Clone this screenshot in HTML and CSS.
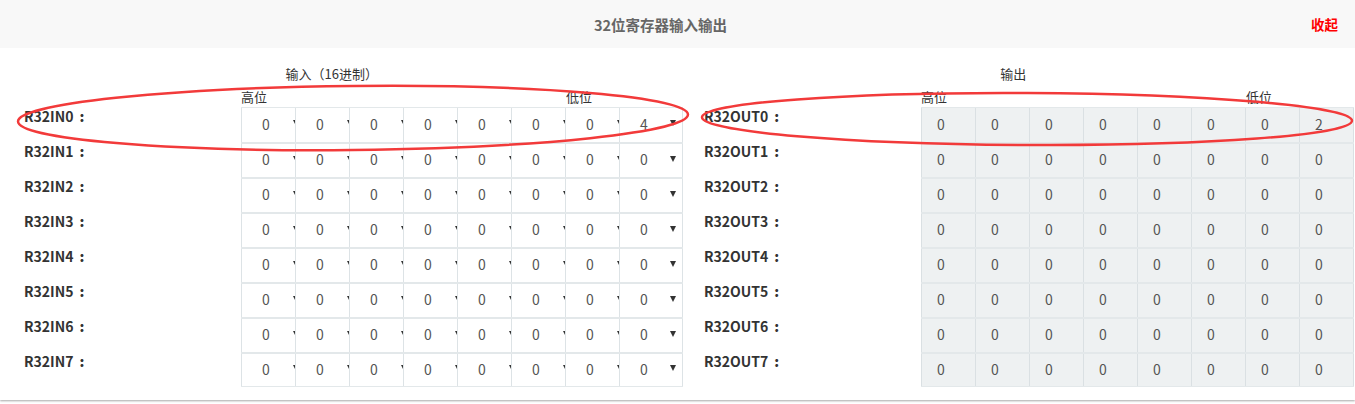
FILE: index.html
```html
<!DOCTYPE html>
<html lang="zh">
<head>
<meta charset="utf-8">
<title>32位寄存器输入输出</title>
<link rel="stylesheet" href="styles.css">
</head>
<body>
<div class="panel">
  <div class="head">
    <span class="title">32位寄存器输入输出</span>
    <a class="toggle">收起</a>
  </div>
  <div class="body">
    <section class="half half-in">
      <div class="cap">输入（16进制）</div>
      <div class="marks"><span class="hi">高位</span><span>低位</span></div>
      <div class="rows">
        <div class="row"><span class="label">R32IN0<b>:</b></span><div class="cells"><div class="sel">0<i></i></div><div class="sel">0<i></i></div><div class="sel">0<i></i></div><div class="sel">0<i></i></div><div class="sel">0<i></i></div><div class="sel">0<i></i></div><div class="sel">0<i></i></div><div class="sel">4<i></i></div></div></div>
        <div class="row"><span class="label">R32IN1<b>:</b></span><div class="cells"><div class="sel">0<i></i></div><div class="sel">0<i></i></div><div class="sel">0<i></i></div><div class="sel">0<i></i></div><div class="sel">0<i></i></div><div class="sel">0<i></i></div><div class="sel">0<i></i></div><div class="sel">0<i></i></div></div></div>
        <div class="row"><span class="label">R32IN2<b>:</b></span><div class="cells"><div class="sel">0<i></i></div><div class="sel">0<i></i></div><div class="sel">0<i></i></div><div class="sel">0<i></i></div><div class="sel">0<i></i></div><div class="sel">0<i></i></div><div class="sel">0<i></i></div><div class="sel">0<i></i></div></div></div>
        <div class="row"><span class="label">R32IN3<b>:</b></span><div class="cells"><div class="sel">0<i></i></div><div class="sel">0<i></i></div><div class="sel">0<i></i></div><div class="sel">0<i></i></div><div class="sel">0<i></i></div><div class="sel">0<i></i></div><div class="sel">0<i></i></div><div class="sel">0<i></i></div></div></div>
        <div class="row"><span class="label">R32IN4<b>:</b></span><div class="cells"><div class="sel">0<i></i></div><div class="sel">0<i></i></div><div class="sel">0<i></i></div><div class="sel">0<i></i></div><div class="sel">0<i></i></div><div class="sel">0<i></i></div><div class="sel">0<i></i></div><div class="sel">0<i></i></div></div></div>
        <div class="row"><span class="label">R32IN5<b>:</b></span><div class="cells"><div class="sel">0<i></i></div><div class="sel">0<i></i></div><div class="sel">0<i></i></div><div class="sel">0<i></i></div><div class="sel">0<i></i></div><div class="sel">0<i></i></div><div class="sel">0<i></i></div><div class="sel">0<i></i></div></div></div>
        <div class="row"><span class="label">R32IN6<b>:</b></span><div class="cells"><div class="sel">0<i></i></div><div class="sel">0<i></i></div><div class="sel">0<i></i></div><div class="sel">0<i></i></div><div class="sel">0<i></i></div><div class="sel">0<i></i></div><div class="sel">0<i></i></div><div class="sel">0<i></i></div></div></div>
        <div class="row last"><span class="label">R32IN7<b>:</b></span><div class="cells"><div class="sel">0<i></i></div><div class="sel">0<i></i></div><div class="sel">0<i></i></div><div class="sel">0<i></i></div><div class="sel">0<i></i></div><div class="sel">0<i></i></div><div class="sel">0<i></i></div><div class="sel">0<i></i></div></div></div>
      </div>
    </section>
    <section class="half half-out">
      <div class="cap">输出</div>
      <div class="marks"><span class="hi">高位</span><span>低位</span></div>
      <div class="rows">
        <div class="row"><span class="label">R32OUT0<b>:</b></span><div class="cells"><div class="out">0</div><div class="out">0</div><div class="out">0</div><div class="out">0</div><div class="out">0</div><div class="out">0</div><div class="out">0</div><div class="out">2</div></div></div>
        <div class="row"><span class="label">R32OUT1<b>:</b></span><div class="cells"><div class="out">0</div><div class="out">0</div><div class="out">0</div><div class="out">0</div><div class="out">0</div><div class="out">0</div><div class="out">0</div><div class="out">0</div></div></div>
        <div class="row"><span class="label">R32OUT2<b>:</b></span><div class="cells"><div class="out">0</div><div class="out">0</div><div class="out">0</div><div class="out">0</div><div class="out">0</div><div class="out">0</div><div class="out">0</div><div class="out">0</div></div></div>
        <div class="row"><span class="label">R32OUT3<b>:</b></span><div class="cells"><div class="out">0</div><div class="out">0</div><div class="out">0</div><div class="out">0</div><div class="out">0</div><div class="out">0</div><div class="out">0</div><div class="out">0</div></div></div>
        <div class="row"><span class="label">R32OUT4<b>:</b></span><div class="cells"><div class="out">0</div><div class="out">0</div><div class="out">0</div><div class="out">0</div><div class="out">0</div><div class="out">0</div><div class="out">0</div><div class="out">0</div></div></div>
        <div class="row"><span class="label">R32OUT5<b>:</b></span><div class="cells"><div class="out">0</div><div class="out">0</div><div class="out">0</div><div class="out">0</div><div class="out">0</div><div class="out">0</div><div class="out">0</div><div class="out">0</div></div></div>
        <div class="row"><span class="label">R32OUT6<b>:</b></span><div class="cells"><div class="out">0</div><div class="out">0</div><div class="out">0</div><div class="out">0</div><div class="out">0</div><div class="out">0</div><div class="out">0</div><div class="out">0</div></div></div>
        <div class="row last"><span class="label">R32OUT7<b>:</b></span><div class="cells"><div class="out">0</div><div class="out">0</div><div class="out">0</div><div class="out">0</div><div class="out">0</div><div class="out">0</div><div class="out">0</div><div class="out">0</div></div></div>
      </div>
    </section>
  </div>
</div>
<svg class="marks-overlay" width="1355" height="404" viewBox="0 0 1355 404">
  <ellipse cx="353" cy="118" rx="335" ry="32" transform="rotate(-0.6 353 118)" fill="none" stroke="#f23a3a" stroke-width="2.5"/>
  <ellipse cx="1027" cy="119" rx="325" ry="26" transform="rotate(0.3 1027 119)" fill="none" stroke="#f23a3a" stroke-width="2.5"/>
</svg>
</body>
</html>
```

FILE: styles.css
```css
html, body {
  margin: 0;
  padding: 0;
  background: #fff;
}
body {
  font-family: "Noto Sans CJK SC", "Noto Sans", sans-serif;
  font-size: 13px;
  color: #333;
  width: 1355px;
  height: 404px;
  overflow: hidden;
  position: relative;
}
.panel {
  height: 400px;
  background: #fff;
  box-shadow: 0 1px 2px rgba(0, 0, 0, 0.35);
}
.head {
  height: 48px;
  background: #f8f8f8;
  display: flex;
  align-items: center;
  padding-left: 10px;
  padding-right: 17px;
}
.title {
  flex: 1;
  text-align: center;
  font-size: 14.5px;
  font-weight: bold;
  color: #666;
}
.toggle {
  color: #f00;
  font-weight: bold;
  font-size: 13.5px;
  cursor: pointer;
}
.body {
  display: flex;
  padding-top: 17px;
}
.half {
  width: 677.5px;
  flex-shrink: 0;
  box-sizing: border-box;
}
.half-in { padding-left: 24px; }
.half-out { padding-left: 26.5px; }
.cap {
  height: 18px;
  line-height: 18px;
  text-align: center;
}
.half-in .cap { margin-left: -24px; padding-right: 14px; }
.half-out .cap { margin-left: -26.5px; padding-right: 6px; }
.marks {
  display: flex;
  height: 19px;
  line-height: 17px;
  margin-top: 5px;
  padding-left: 217px;
}
.marks .hi {
  width: 325px;
}
.rows {
  display: flex;
  flex-direction: column;
}
.row {
  display: flex;
  height: 35px;
}
.label {
  width: 217px;
  flex-shrink: 0;
  line-height: 18px;
  font-size: 14px;
  font-weight: bold;
  color: #333;
}
.label b {
  margin-left: 6px;
}
.cells {
  display: flex;
  flex-shrink: 0;
  border-top: 2px solid #e3e8ea;
  box-sizing: border-box;
}
.row:first-child .cells { border-top-width: 1px; }
.row.last .cells { border-bottom: 1px solid #e3e8ea; }
.sel {
  width: 64px;
  margin-right: -10px;
  box-sizing: border-box;
  border-left: 1px solid #dde3e6;
  background: #fff;
  display: flex;
  align-items: center;
  padding-left: 20px;
  padding-bottom: 3px;
  font-size: 14px;
  color: #555;
}
.sel:last-child {
  margin-right: 0;
  border-right: 1px solid #dde3e6;
}
.sel i {
  margin-left: auto;
  margin-right: 6px;
  width: 0;
  height: 0;
  border-left: 3px solid transparent;
  border-right: 3px solid transparent;
  border-top: 6px solid #333;
  margin-top: -1px;
}
.out {
  width: 54px;
  box-sizing: border-box;
  border-left: 1px solid #dae0e3;
  background: #eef1f2;
  display: flex;
  align-items: center;
  padding-left: 15px;
  padding-bottom: 3px;
  font-size: 14px;
  color: #555;
}
.out:last-child {
  width: 55px;
  border-right: 1px solid #dae0e3;
}
.marks-overlay {
  position: absolute;
  left: 0;
  top: 0;
  pointer-events: none;
}
```
